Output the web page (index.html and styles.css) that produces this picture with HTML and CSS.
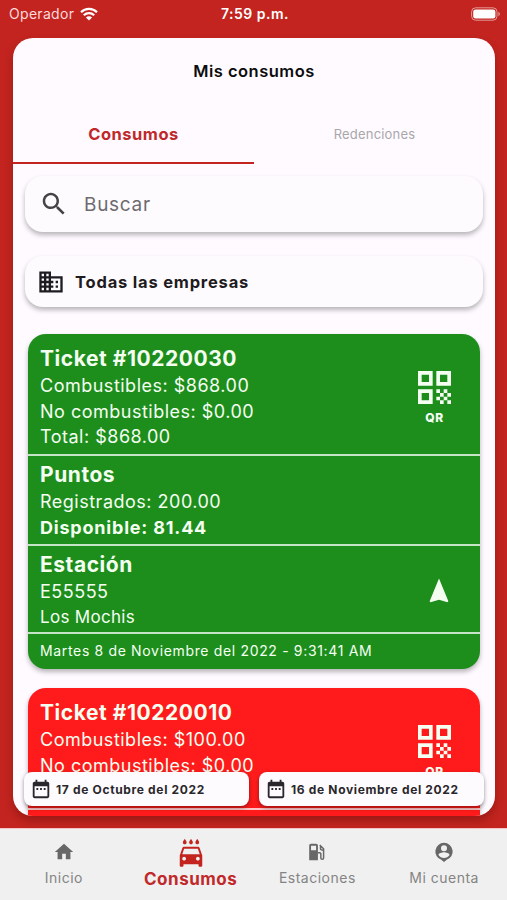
FILE: index.html
```html
<!DOCTYPE html>
<html lang="es">
<head>
    <meta charset="UTF-8">
    <meta name="viewport" content="width=device-width, initial-scale=1.0">
    <title>Mis consumos</title>

    <link rel="stylesheet" href="styles.css">
</head>

<body>

  <!-- iconos compartidos -->
  <svg class="sprite">
    <symbol id="qr" viewBox="3 3 18 18">
      <path d="M3 11h8V3H3v8zm2-6h4v4H5V5zM3 21h8v-8H3v8zm2-6h4v4H5v-4zM13 3v8h8V3h-8zm6 6h-4V5h4v4zM19 19h2v2h-2zM13 13h2v2h-2zM15 15h2v2h-2zM13 17h2v2h-2zM15 19h2v2h-2zM17 17h2v2h-2zM17 13h2v2h-2zM19 15h2v2h-2z"/>
    </symbol>
    <symbol id="calendario" viewBox="0 0 24 24">
      <path d="M9 11H7v2h2v-2zm4 0h-2v2h2v-2zm4 0h-2v2h2v-2zm2-7h-1V2h-2v2H8V2H6v2H5c-1.11 0-1.99.9-1.99 2L3 20c0 1.1.89 2 2 2h14c1.1 0 2-.9 2-2V6c0-1.1-.9-2-2-2zm0 16H5V9h14v11z"/>
    </symbol>
  </svg>

  <header class="estado">
    <div class="operador">
      <span>Operador</span>
      <svg class="wifi" viewBox="0 0 18 14">
        <path d="M1 5.2a11.4 11.4 0 0 1 16 0M3.8 8.2a7.4 7.4 0 0 1 10.4 0"/>
        <path class="punto" d="M9 13.6 5.9 10.5a4.4 4.4 0 0 1 6.2 0z"/>
      </svg>
    </div>
    <div class="hora">7:59 p.m.</div>
    <div class="bateria">
      <svg viewBox="0 0 30 14" width="30" height="14">
        <rect class="marco" x=".6" y=".8" width="25.4" height="12.4" rx="4"/>
        <rect x="2.2" y="2.4" width="22.2" height="9.2" rx="2.4"/>
        <path class="polo" d="M27.4 4.8c2 .8 2 3.6 0 4.4z"/>
      </svg>
    </div>
  </header>

  <main class="panel">
    <h1>Mis consumos</h1>

    <nav class="tabs">
      <a class="tab activa">Consumos</a>
      <a class="tab">Redenciones</a>
    </nav>

    <div class="campo buscar">
      <svg viewBox="0 0 24 24"><path d="M15.5 14h-.79l-.28-.27C15.41 12.59 16 11.11 16 9.5 16 5.91 13.09 3 9.5 3S3 5.91 3 9.5 5.91 16 9.5 16c1.61 0 3.09-.59 4.23-1.57l.27.28v.79l5 4.99L20.49 19l-4.99-5zm-6 0C7.01 14 5 11.99 5 9.5S7.01 5 9.5 5 14 7.01 14 9.5 11.99 14 9.5 14z"/></svg>
      <span>Buscar</span>
    </div>

    <div class="campo empresas">
      <svg viewBox="0 0 24 24"><path d="M12 7V3H2v18h20V7H12zM6 19H4v-2h2v2zm0-4H4v-2h2v2zm0-4H4V9h2v2zm0-4H4V5h2v2zm4 12H8v-2h2v2zm0-4H8v-2h2v2zm0-4H8V9h2v2zm0-4H8V5h2v2zm10 12h-8v-2h2v-2h-2v-2h2v-2h-2V9h8v10zm-2-8h-2v2h2v-2zm0 4h-2v2h2v-2z"/></svg>
      <span>Todas las empresas</span>
    </div>

    <article class="ticket verde">
      <section class="compra">
        <div>
          <h2>Ticket #10220030</h2>
          <p>Combustibles: $868.00</p>
          <p>No combustibles: $0.00</p>
          <p>Total: $868.00</p>
        </div>
        <div class="qr">
          <svg><use href="#qr"/></svg>
          <span>QR</span>
        </div>
      </section>
      <section>
        <div>
          <h2>Puntos</h2>
          <p>Registrados: 200.00</p>
          <p class="disponible">Disponible: 81.44</p>
        </div>
      </section>
      <section class="estacion">
        <div>
          <h2>Estación</h2>
          <p>E55555</p>
          <p class="ciudad">Los Mochis</p>
        </div>
        <svg class="flecha" viewBox="0 0 24 24"><path d="M12 2L4.500 20.290l.71.71L12 19l6.790 2 .71-.71z"/></svg>
      </section>
      <footer>Martes 8 de Noviembre del 2022 - 9:31:41 AM</footer>
    </article>

    <article class="ticket rojo">
      <section class="compra">
        <div>
          <h2>Ticket #10220010</h2>
          <p>Combustibles: $100.00</p>
          <p>No combustibles: $0.00</p>
        </div>
        <div class="qr">
          <svg><use href="#qr"/></svg>
          <span>QR</span>
        </div>
      </section>
      <section></section>
    </article>

    <!-- rango de fechas, flota sobre la lista -->
    <div class="fechas">
      <div class="fecha">
        <svg><use href="#calendario"/></svg>
        <span>17 de Octubre del 2022</span>
      </div>
      <div class="fecha">
        <svg><use href="#calendario"/></svg>
        <span>16 de Noviembre del 2022</span>
      </div>
    </div>
  </main>

  <nav class="menu">
    <a>
      <svg viewBox="0 0 24 24"><path d="M10 20v-6h4v6h5v-8h3L12 3 2 12h3v8z"/></svg>
      <span>Inicio</span>
    </a>
    <a class="actual">
      <svg viewBox="0 0 24 24"><path d="M17 5c.83 0 1.5-.67 1.5-1.5 0-1-1.5-2.7-1.5-2.7s-1.5 1.7-1.5 2.7c0 .83.67 1.5 1.5 1.5zm-5 0c.83 0 1.5-.67 1.5-1.5 0-1-1.5-2.7-1.5-2.7s-1.5 1.7-1.5 2.7c0 .83.67 1.5 1.5 1.5zM7 5c.83 0 1.5-.67 1.5-1.5C8.5 2.5 7 .8 7 .8S5.5 2.5 5.5 3.5C5.5 4.33 6.17 5 7 5zm11.92 3.01C18.72 7.42 18.16 7 17.5 7h-11c-.66 0-1.21.42-1.42 1.01L3 14v8c0 .55.45 1 1 1h1c.55 0 1-.45 1-1v-1h12v1c0 .55.45 1 1 1h1c.55 0 1-.45 1-1v-8l-2.08-5.99zM6.5 18c-.83 0-1.5-.67-1.5-1.5S5.67 15 6.5 15s1.5.67 1.5 1.5S7.33 18 6.5 18zm11 0c-.83 0-1.5-.67-1.5-1.5s.67-1.5 1.5-1.5 1.5.67 1.5 1.5-.67 1.5-1.5 1.5zM5 13l1.5-4.5h11L19 13H5z"/></svg>
      <span>Consumos</span>
    </a>
    <a>
      <svg viewBox="0 0 24 24"><path fill-rule="evenodd" d="M5.5 3H11c1.1 0 2 .9 2 2v16H3.5V5c0-1.1.9-2 2-2zM5.5 5.2v4.8h5.500V5.200z"/><path class="manguera" d="M15 4.500l4.200 4v10c0 2-3 2-3 0V14c0-.8-.5-1.200-1.200-1.200H13M15.800 6v2.500c0 1 1.200 1.500 3.400 1.500"/></svg>
      <span>Estaciones</span>
    </a>
    <a>
      <svg viewBox="0 0 24 24"><path fill-rule="evenodd" d="M12 2a9.5 9.5 0 0 0-3 18.5l3 2.5 3-2.5A9.5 9.5 0 0 0 12 2zM12 4.500a3.300 3.300 0 1 1 0 6.600 3.300 3.300 0 0 1 0-6.600zM12 18.500c-2.500 0-4.700-1.300-6-3.300 0-2 4-3 6-3s6 1 6 3c-1.300 2-3.500 3.300-6 3.300z"/></svg>
      <span>Mi cuenta</span>
    </a>
  </nav>

</body>
</html>
```
FILE: styles.css
```css
* {
  box-sizing: border-box;
}

body {
  margin: 0;
  height: 900px;
  display: flex;
  flex-direction: column;
  overflow: hidden;
  background: #c3241f;
  font-family: Inter, "Liberation Sans", sans-serif;
  letter-spacing: 0.5px;
}

h1, h2, p {
  margin: 0;
}

svg {
  display: block;
  fill: currentColor;
}

.sprite {
  position: absolute;
  width: 0;
  height: 0;
}

/* Barra de estado */

.estado {
  height: 38px;
  padding: 0 6px 11px 9px;
  display: grid;
  grid-template-columns: 1fr auto 1fr;
  align-items: center;
  color: #fff;
  font-size: 14px;
}

.operador {
  display: flex;
  align-items: center;
  gap: 6px;
  color: #fbd9dc;
  letter-spacing: 0.3px;
}

.wifi {
  width: 18px;
  height: 14px;
  fill: none;
  stroke: #fff;
  stroke-width: 2.2;
}

.wifi .punto {
  fill: #fff;
  stroke: none;
}

.hora {
  font-weight: 600;
  letter-spacing: 0.5px;
}

.bateria {
  justify-self: end;
}

.marco {
  fill: none;
  stroke: #e39a98;
}

.polo {
  fill: #e39a98;
}

/* Panel principal */

.panel {
  position: relative;
  flex: none;
  height: 778px;
  margin: 0 12px 0 13px;
  overflow: hidden;
  border-radius: 20px;
  background: #fefaff;
  box-shadow: 0 5px 8px rgba(70, 0, 0, 0.3);
}

h1 {
  padding-top: 22px;
  font-size: 16.5px;
  font-weight: 600;
  line-height: 22px;
  text-align: center;
  color: #0c0c0c;
}

.tabs {
  display: flex;
  margin-top: 22px;
}

.tab {
  flex: 1;
  height: 60px;
  border-bottom: 2px solid transparent;
  text-align: center;
  line-height: 60px;
  font-size: 13px;
  letter-spacing: 0.2px;
  color: #a9a7aa;
}

.activa {
  border-color: #c3241f;
  font-size: 16.5px;
  font-weight: 700;
  letter-spacing: 0.5px;
  color: #c0282a;
}

.campo {
  display: flex;
  align-items: center;
  margin: 0 12px;
  border-radius: 18px;
  background: #fefbff;
  box-shadow: 0 3px 5px rgba(0, 0, 0, 0.28);
}

.buscar {
  height: 56px;
  margin-top: 12px;
  padding-left: 14px;
  gap: 15px;
  font-size: 19px;
  letter-spacing: 0.7px;
  color: #6d6b6f;
}

.buscar svg {
  width: 30px;
  height: 30px;
  color: #454347;
}

.empresas {
  height: 51px;
  margin-top: 24px;
  padding-left: 12px;
  gap: 10px;
  font-size: 16.5px;
  font-weight: 700;
  letter-spacing: 0.8px;
  color: #1e1c20;
}

.empresas svg {
  width: 28px;
  height: 28px;
}

/* Tickets */

.ticket {
  margin: 27px 15px 0;
  border-radius: 18px;
  color: #f4fff2;
  font-size: 18px;
  line-height: 25.5px;
  letter-spacing: 0.5px;
  box-shadow: 0 3px 5px rgba(0, 0, 0, 0.28);
}

.verde {
  background: #1d8e1c;
}

.rojo {
  margin-top: 19px;
  background: #ff1b1b;
}

.ticket section {
  display: flex;
  justify-content: space-between;
  height: 90px;
  padding: 4px 12px 0;
  border-bottom: 2px solid rgba(255, 255, 255, 0.75);
}

.ticket .compra {
  height: 122px;
  padding: 10px 29px 0 12px;
}

.ticket .estacion {
  height: 88px;
  padding: 4px 26px 0 12px;
}

h2 {
  font-size: 21px;
  font-weight: 700;
  line-height: 29px;
  letter-spacing: 0.55px;
}

.disponible {
  font-weight: 700;
  letter-spacing: 0.8px;
}

.ciudad {
  font-size: 17px;
  line-height: 25px;
  letter-spacing: 0.3px;
}

.qr {
  display: flex;
  flex-direction: column;
  align-items: center;
  padding-top: 27px;
  font-size: 12px;
  font-weight: 800;
  line-height: 28px;
}

.qr svg {
  width: 33px;
  height: 33px;
}

.flecha {
  width: 30px;
  height: 30px;
  margin-top: 26px;
}

.ticket footer {
  height: 35px;
  padding-left: 12px;
  font-size: 14px;
  line-height: 34px;
  letter-spacing: 0.66px;
}

/* Fechas */

.fechas {
  position: absolute;
  left: 11px;
  right: 11px;
  bottom: 10px;
  display: flex;
  gap: 10px;
}

.fecha {
  flex: 1;
  display: flex;
  align-items: center;
  gap: 4px;
  height: 34px;
  padding-left: 6px;
  border-radius: 8px;
  background: #fefbff;
  box-shadow: 0 2px 4px rgba(0, 0, 0, 0.4);
  font-size: 12px;
  font-weight: 700;
  letter-spacing: 0.66px;
  color: #29272b;
}

.fecha svg {
  width: 22px;
  height: 22px;
}

/* Menu inferior */

.menu {
  display: flex;
  height: 72px;
  margin-top: auto;
  border-top: 1px solid #f5c4c4;
  background: #f0f0f0;
  color: #848484;
  font-size: 14px;
}

.menu a {
  flex: 1;
  display: flex;
  flex-direction: column;
  align-items: center;
  padding: 12px 0 0 1px;
  line-height: 29px;
}

.menu svg {
  width: 22px;
  height: 22px;
  color: #676767;
}

.manguera {
  fill: none;
  stroke: currentColor;
  stroke-width: 1.6;
}

.menu .actual {
  padding-top: 9px;
  font-size: 17px;
  font-weight: 700;
  line-height: 23px;
  color: #c0282a;
}

.menu .actual svg {
  width: 30px;
  height: 30px;
  color: #c3241f;
}
```
